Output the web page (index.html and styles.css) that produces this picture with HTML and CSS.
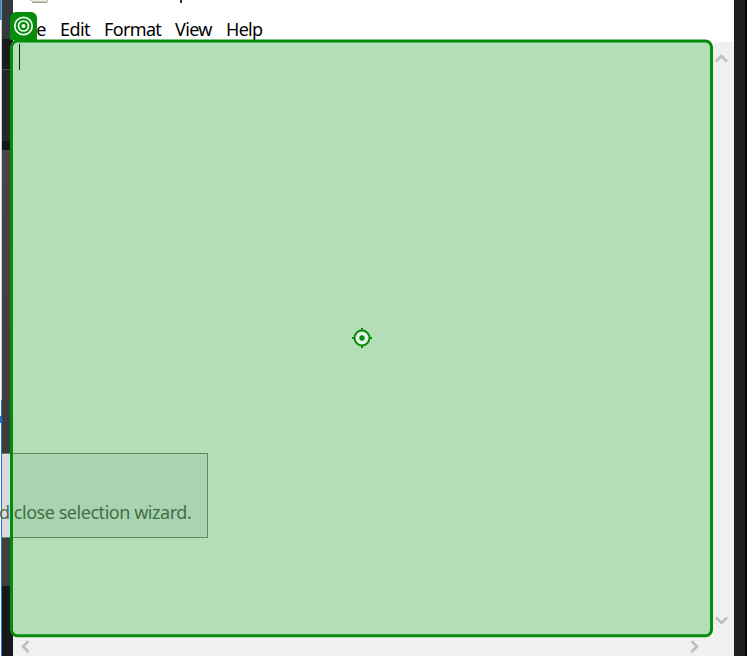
FILE: index.html
```
<!DOCTYPE html>
<html lang="en">
<head>
<meta charset="utf-8">
<title>Element selection</title>
<link rel="stylesheet" href="styles.css">
</head>
<body>
<div class="desktop">
  <div class="backdrop-left">
    <div class="edge"><i class="edge-blue"></i><i class="edge-white"></i><i class="edge-mark"></i><i class="edge-rest"></i></div>
    <div class="edge-line"></div>
    <div class="panels">
      <i class="p-title"></i><i class="p-bar"></i><i class="p-rule"></i><i class="p-tools"></i><i class="p-gap"></i><i class="p-body"></i><i class="p-note"></i><i class="p-low"></i><i class="p-base"></i>
    </div>
  </div>
  <main class="window">
    <header class="titlebar">
      <svg class="app-icon" width="22" height="4" viewBox="0 0 22 4"><path d="M1 0h3v1H1z" fill="#a9d5e5"/><path d="M3 0h14v1.500H3z" fill="#e8f1f2"/><path d="M3 1.500h15V3H3z" fill="#aa9c80"/><path d="M18 0h1v2h-1z" fill="#c3b18d"/></svg>
      <i class="title-descender"></i>
    </header>
    <nav class="menu"><span class="file">File</span><span class="edit">Edit</span><span class="format">Format</span><span class="view">View</span><span class="help">Help</span></nav>
    <section class="editor">
      <div class="page"></div>
      <div class="vscroll">
        <svg width="13" height="10" viewBox="0 0 13 10"><path d="M1 8.500L6.500 3L12 8.500"/></svg>
        <svg width="13" height="10" viewBox="0 0 13 10"><path d="M1 1.500L6.500 7L12 1.500"/></svg>
      </div>
    </section>
    <footer class="hscroll">
      <svg width="10" height="13" viewBox="0 0 10 13"><path d="M8.500 1L3 6.500L8.500 12"/></svg>
      <svg width="10" height="13" viewBox="0 0 10 13"><path d="M1.500 1L7 6.500L1.500 12"/></svg>
    </footer>
  </main>
  <div class="backdrop-right"></div>

  <svg class="selection" width="747" height="656" viewBox="0 0 747 656">
    <rect x="11.500" y="41.100" width="700" height="594.600" rx="6" fill="#b4deb6" stroke="#058c0b" stroke-width="3"/>
    <path d="M19.500 44v26" stroke="#062b08"/>
    <g fill="none" stroke="#058c0b" stroke-width="2">
      <circle cx="362" cy="338" r="7.500" fill="#e5f3e6"/>
      <path d="M362 328v3M362 345v3M352 338h3M369 338h3"/>
      <circle cx="362" cy="338" r="2.700" fill="#058c0b" stroke="none"/>
    </g>
  </svg>
  <div class="notice"><span>d close selection wizard.</span></div>
  <div class="badge">
    <svg width="27" height="28" viewBox="0 0 27 28"><g fill="none" stroke="#f2faf2" stroke-width="1.700"><circle cx="13.500" cy="14" r="8.700"/><circle cx="13.500" cy="14" r="5"/><circle cx="13.500" cy="14" r="2" fill="#f2faf2" stroke="none"/></g></svg>
  </div>
</div>
</body>
</html>
```
FILE: styles.css
```
* { box-sizing: border-box; }
body { margin: 0; overflow: hidden; font-family: "Noto Sans", "Open Sans", sans-serif; }
i { display: block; }
.desktop { position: relative; display: flex; width: 747px; height: 656px; }
.backdrop-left { display: flex; width: 13px; }
.edge { width: 1px; background: #fff; }
.edge-blue { height: 20px; background: #4b80b5; }
.edge-white { height: 396px; background: #fff; }
.edge-mark { height: 7px; background: #1673c9; }
.edge-line { width: 1px; background: linear-gradient(#73a2cf 0 20px, #c9ced3 20px 400px, #2676cd 400px); }
.panels { display: flex; flex-direction: column; width: 11px; }
.p-title { height: 39px; background: #35393c; }
.p-bar { height: 30px; background: #1a1b1c; }
.p-rule { height: 1px; background: #494a4b; }
.p-tools { height: 71px; background: #25272b; }
.p-gap { height: 9px; background: #151618; }
.p-body { height: 303px; background: linear-gradient(#464649, #3d3d3e); }
.p-note { height: 85px; background: #dadae2; }
.p-low { height: 48px; background: #3f3f40; }
.p-base { flex: 1; background: #17181a; }
.window { display: flex; flex-direction: column; width: 721px; background: #fff; }
.titlebar { display: flex; height: 16px; padding-left: 16px; }
.app-icon { display: block; }
.title-descender { width: 2px; height: 3px; margin-left: 129px; background: #30343a; }
.menu { display: flex; height: 26px; align-items: center; font-size: 18px; line-height: 26px; color: #000; padding-left: 4px; white-space: nowrap; }
.menu span { display: block; }
.file { width: 43px; letter-spacing: .2px; }
.edit { width: 44px; letter-spacing: -.6px; }
.format { width: 71px; letter-spacing: -.65px; }
.view { width: 51px; letter-spacing: -.65px; }
.help { letter-spacing: -.7px; }
.editor { display: flex; height: 594px; }
.page { width: 700px; }
.vscroll { display: flex; flex: 1; flex-direction: column; justify-content: space-between; padding: 11px 0 10px 2px; background: #f0f0f0; }
.hscroll { display: flex; flex: 1; align-items: flex-start; justify-content: space-between; padding: 4px 34px 0 7px; background: #f0f0f0; }
.vscroll svg, .hscroll svg { display: block; fill: none; stroke: #bfbfbf; stroke-width: 2.600; }
.backdrop-right { width: 13px; background: linear-gradient(90deg, #1e1f22 0 11px, #050507 11px); }
.selection { position: absolute; inset: 0; }
.notice { position: absolute; left: 2px; top: 453px; width: 206px; height: 85px; border: 1px solid #5b8b62; border-left: 0; background: linear-gradient(90deg, transparent 11px, #a9d4b0 11px); font-size: 18px; line-height: 24px; color: #3f7046; white-space: nowrap; }
.notice span { display: block; margin: 46px 0 0 -3px; letter-spacing: -.46px; }
.notice::before { content: ""; position: absolute; z-index: 1; left: 8px; top: -1px; width: 3px; height: 85px; background: #058c0b; }
.badge { position: absolute; left: 10px; top: 12px; width: 27px; height: 28px; background: #058c0b; border-radius: 6px 6px 0 0; }
.badge svg { display: block; }
```
